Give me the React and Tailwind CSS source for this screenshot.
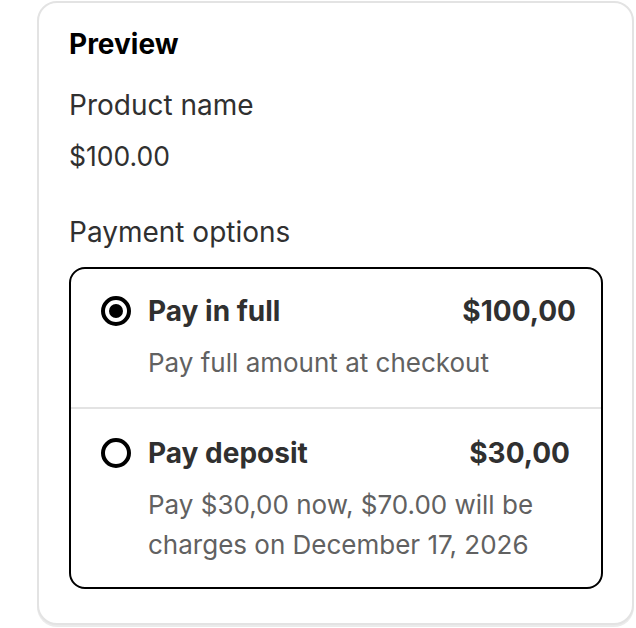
import React from "react";

function Radio({ checked }) {
  return (
    <span className="flex h-[30px] w-[30px] shrink-0 items-center justify-center rounded-full border-[4px] border-black bg-white">
      {checked && <span className="h-[14px] w-[14px] rounded-full bg-black" />}
    </span>
  );
}

function Option({ checked, title, amount, children, className, amountClass }) {
  return (
    <div className={className}>
      <div className="flex items-center">
        <Radio checked={checked} />
        <span className="ml-[17px] text-[28px] font-bold leading-[40px] text-[#303030]">{title}</span>
        <span className={`ml-auto text-[28px] font-bold leading-[40px] text-[#303030] ${amountClass}`}>{amount}</span>
      </div>
      <div className="mt-[12px] pl-[47px] text-[26px] leading-[40px] text-[#616161]">{children}</div>
    </div>
  );
}

export default function App() {
  return (
    <div
      className="h-[628px] w-[636px] bg-white pl-[37px] pt-[1px]"
      style={{ fontFamily: "Inter, 'Noto Sans', sans-serif" }}
    >
      <div className="h-[624px] w-[597px] rounded-[20px] border-2 border-[#e3e3e3] bg-white px-[30px] pt-[21px] shadow-[0_2px_0_0_rgba(0,0,0,0.08)]">
        <h2 className="text-[28px] font-bold leading-[40px] text-black">Preview</h2>
        <p className="mt-[21px] text-[28px] leading-[40px] text-[#303030]">Product name</p>
        <p className="mt-[11px] text-[26.5px] leading-[40px] text-[#303030]">$100.00</p>
        <p className="mt-[36px] text-[28px] leading-[40px] text-[#303030]">Payment options</p>

        <div className="mt-[15px] w-[534px] rounded-[16px] border-2 border-black">
          <Option
            checked
            title="Pay in full"
            amount="$100,00"
            amountClass="mr-[25px]"
            className="pl-[30px] pt-[22px] pb-[24px]"
          >
            Pay full amount at checkout
          </Option>
          <div className="h-[2px] bg-[#e3e3e3]" />
          <Option
            title="Pay deposit"
            amount="$30,00"
            amountClass="mr-[31px]"
            className="pl-[30px] pt-[24px] pb-[22px]"
          >
            Pay $30,00 now, $70.00 will be
            <br />
            charges on December 17, 2026
          </Option>
        </div>
      </div>
    </div>
  );
}
